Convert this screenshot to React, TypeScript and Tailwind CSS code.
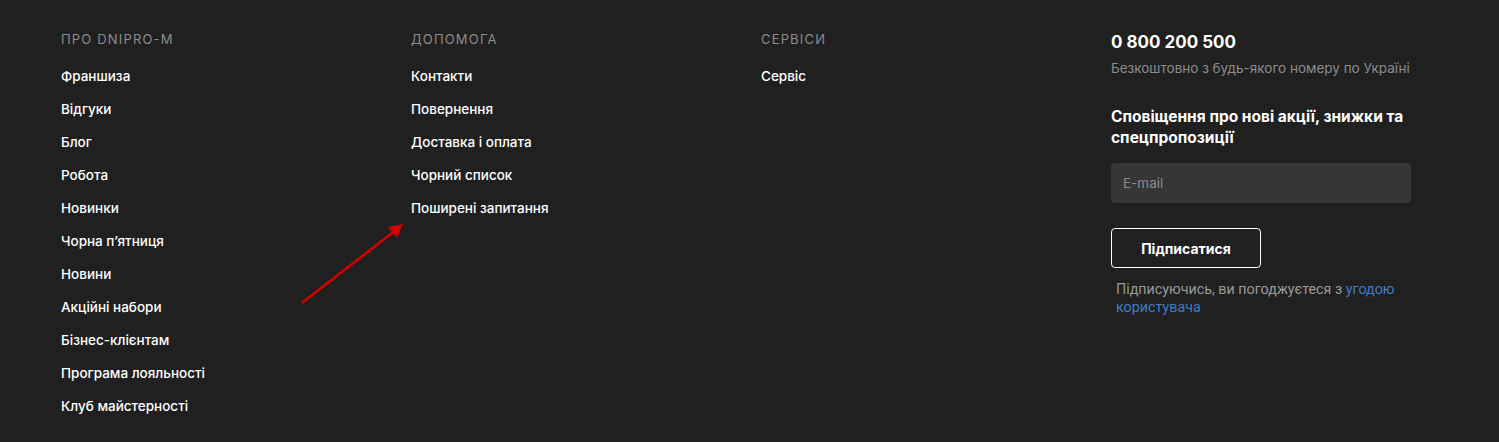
import { Fragment } from 'react'

const cols = [
  {
    title: 'Про Dnipro-M',
    links: [
      'Франшиза',
      'Відгуки',
      'Блог',
      'Робота',
      'Новинки',
      'Чорна п’ятниця',
      'Новини',
      'Акційні набори',
      'Бізнес-клієнтам',
      'Програма лояльності',
      'Клуб майстерності',
    ],
  },
  {
    title: 'Допомога',
    links: ['Контакти', 'Повернення', 'Доставка і оплата', 'Чорний список', 'Поширені запитання'],
  },
  { title: 'Сервіси', links: ['Сервіс'] },
]

export default function App() {
  return (
    <footer
      className="relative w-full h-[442px] bg-[#202020] text-white"
      style={{ fontFamily: 'Inter, "Open Sans", sans-serif' }}
    >
      <div className="flex pl-[61px] pt-[31px]">
        {cols.map((c) => (
          <div key={c.title} className="w-[350px] shrink-0">
            <h3 className="text-[13px] leading-4 uppercase tracking-[0.09em] text-[#8c8c8c]">{c.title}</h3>
            <ul className="mt-[20px] flex flex-col gap-[15px]">
              {c.links.map((l) => (
                <li key={l} className="text-[13.5px] leading-[18px] font-medium">
                  {l}
                </li>
              ))}
            </ul>
          </div>
        ))}

        <div className="w-[300px] shrink-0">
          <div className="mt-[1px] text-[17px] leading-[20px] font-bold">0 800 200 500</div>
          <p className="mt-[7px] text-[13.5px] leading-[18px] text-[#8c8c8c] whitespace-nowrap">
            Безкоштовно з будь-якого номеру по Україні
          </p>
          <h4 className="mt-[29px] text-[15.5px] leading-[21px] font-bold">
            Сповіщення про нові акції, знижки та спецпропозиції
          </h4>
          <input
            placeholder="E-mail"
            className="mt-[15px] w-[300px] h-[40px] rounded bg-[#363636] px-3 text-[13.5px] text-white placeholder:text-[#8c8c8c] outline-none"
          />
          <button className="mt-[25px] w-[150px] h-[40px] rounded-sm border border-white text-[14px] font-bold">
            Підписатися
          </button>
          <p
            className="mt-[12px] pl-[5px] text-[14.3px] leading-[18px] text-[#9a9a9a]"
            style={{ fontFamily: 'Roboto, "Open Sans", sans-serif' }}
          >
            Підписуючись, ви погоджуєтеся з <span className="text-[#3f7cc4]">угодою користувача</span>
          </p>
        </div>
      </div>

      <svg className="absolute left-[300px] top-[218px]" width="110" height="90" viewBox="0 0 110 90">
        <Fragment>
          <line x1="3" y1="84" x2="96" y2="12" stroke="#d40000" strokeWidth="2.6" strokeLinecap="round" />
          <polygon points="103,6 88,9 97,20" fill="#d40000" />
        </Fragment>
      </svg>
    </footer>
  )
}
